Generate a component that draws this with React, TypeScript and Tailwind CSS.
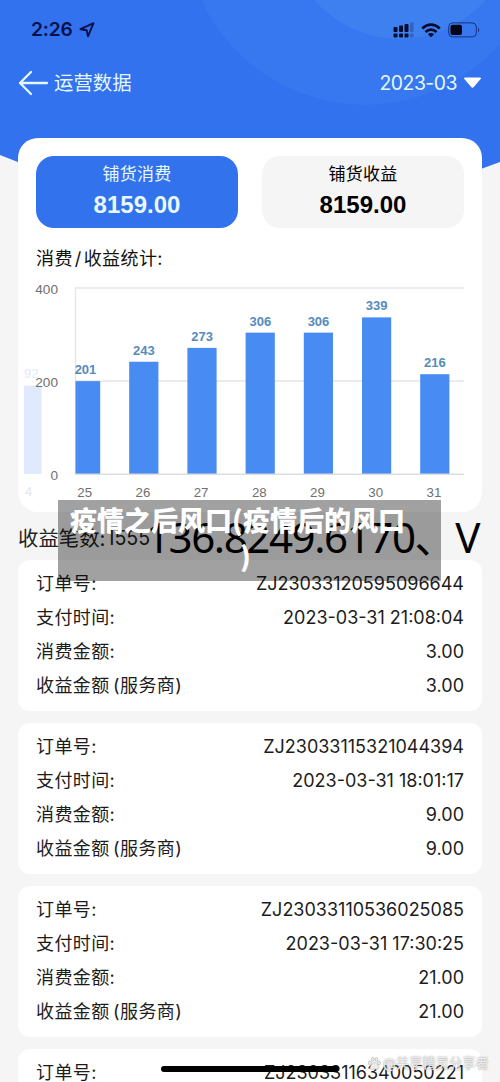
const days = [
  { day: "25", value: 201 },
  { day: "26", value: 243 },
  { day: "27", value: 273 },
  { day: "28", value: 306 },
  { day: "29", value: 306 },
  { day: "30", value: 339 },
  { day: "31", value: 216 },
];

const orders = [
  { id: "ZJ23033120595096644", time: "2023-03-31 21:08:04", amount: "3.00" },
  { id: "ZJ23033115321044394", time: "2023-03-31 18:01:17", amount: "9.00" },
  { id: "ZJ23033110536025085", time: "2023-03-31 17:30:25", amount: "21.00" },
];

const lastOrderId = "ZJ23033116340050221";

function HeaderBackground() {
  return (
    <svg className="absolute inset-x-0 top-0" width="500" height="240" viewBox="0 0 500 240">
      <defs>
        <clipPath id="header">
          <path d="M0 0H500V162Q250 260 0 155Z" />
        </clipPath>
      </defs>
      <g clipPath="url(#header)">
        <rect width="500" height="240" fill="#3272ee" />
        <circle cx="365" cy="-75" r="180" fill="#3777ef" />
        <circle cx="400" cy="-75" r="114" fill="#3f80f1" />
      </g>
    </svg>
  );
}

function StatusBar() {
  return (
    <div className="flex h-[60px] items-center justify-between pr-[20px] pl-[31px] text-[#08104a]">
      <div className="flex items-center gap-[6px]">
        <span className="text-[19.2px] leading-none font-semibold tracking-[-0.2px]">2:26</span>
        <svg width="16" height="16" viewBox="0 0 16 16" fill="none" stroke="currentColor" strokeWidth="1.9" strokeLinejoin="round">
          <path d="M14.5 1.2L1.4 7.2L7.7 8.3L9 14.4Z" />
        </svg>
      </div>
      <div className="flex items-center gap-[7px]">
        <svg width="21" height="16" viewBox="0 0 21 16" fill="#050b2c">
          <rect x="0.5" y="5" width="4" height="5" rx="1" />
          <rect x="6" y="3.5" width="4" height="6.5" rx="1" />
          <rect x="11.5" y="2" width="4" height="8" rx="1" />
          <rect x="17" y="0.5" width="3.5" height="9.5" rx="1" opacity="0.25" />
          <rect x="0.5" y="11.5" width="4" height="4" rx="1" />
          <rect x="6" y="11.5" width="4" height="4" rx="1" />
          <rect x="11.5" y="11.5" width="4" height="4" rx="1" />
          <rect x="17" y="11.5" width="3.5" height="4" rx="1" opacity="0.25" />
        </svg>
        <svg width="20" height="15" viewBox="0 0 20 15" fill="none" stroke="#050b2c" strokeWidth="2.7">
          <path d="M1.2 5.4Q10 -2.2 18.8 5.4" />
          <path d="M4.4 9Q10 4.2 15.6 9" />
          <path d="M10 14.3L6.8 11.3Q10 8.8 13.2 11.3Z" fill="#050b2c" stroke="none" />
        </svg>
        <svg width="32" height="16" viewBox="0 0 32 16">
          <rect x="0.7" y="0.9" width="27.6" height="14" rx="4" fill="none" stroke="#17347c" strokeWidth="1" />
          <rect x="2.5" y="2.7" width="11.5" height="10.4" rx="2" fill="#020516" />
          <path d="M30 5.5Q32.5 8 30 10.5Z" fill="#17347c" />
        </svg>
      </div>
    </div>
  );
}

function NavBar() {
  return (
    <div className="flex h-[46px] items-center justify-between pr-[18px] pl-[18px] text-[#e4f8fb]">
      <div className="flex items-center gap-[5px]">
        <svg width="31" height="26" viewBox="0 0 31 26" fill="none" stroke="currentColor" strokeWidth="2.3" strokeLinecap="round" strokeLinejoin="round">
          <path d="M13 2L2 13L13 24M2 13H29" />
        </svg>
        <span className="pt-[2px] text-[19.4px]">运营数据</span>
      </div>
      <div className="flex items-center gap-[6px] pt-px">
        <span className="text-[19.4px] tracking-[-0.5px]">2023-03</span>
        <svg width="19" height="12" viewBox="0 0 19 12" fill="white">
          <path d="M2 0.5H17Q19 0.5 17.6 2.1L11 9.8Q9.5 11.6 8 9.8L1.4 2.1Q0 0.5 2 0.5Z" />
        </svg>
      </div>
    </div>
  );
}

function BarChart() {
  const bottom = 199;
  return (
    <svg className="block font-['Liberation_Sans',sans-serif]" width="464" height="237" viewBox="0 0 464 237">
      <g stroke="#e3e4e7" strokeWidth="1.3">
        <path d="M57 13H446" />
        <path d="M57 106H446" />
        <path d="M57.5 13V199" />
      </g>
      <g fill="#e1eafd">
        <rect x="6" y="110.5" width="17.5" height="88.5" />
        <text x="6" y="103" fontSize="13">92</text>
        <text x="7" y="221" fontSize="13" fill="#e5e7e9">4</text>
      </g>
      <g fontSize="13.6" fill="#707070" textAnchor="end">
        <text x="40" y="18.5">400</text>
        <text x="40" y="111.5">200</text>
        <text x="40" y="204.5">0</text>
      </g>
      {days.map((d, i) => {
        const x = 53 + i * 58.2;
        const left = i === 0 ? 57.5 : x;
        const top = bottom - d.value * 0.462;
        return (
          <g key={d.day} textAnchor="middle">
            <rect x={left} y={top} width={x + 29.2 - left} height={bottom - top} fill="#478bf3" />
            <text x={i === 0 ? 67.5 : x + 14.7} y={top - 7} fontSize="13" fontWeight="bold" fill="#558bbd">
              {d.value}
            </text>
            <text x={x + 13.7} y="221.5" fontSize="13.3" fill="#707070">
              {d.day}
            </text>
          </g>
        );
      })}
      <path d="M57 199.3H446" stroke="#dadde2" strokeWidth="1.6" />
    </svg>
  );
}

function SummaryCard() {
  return (
    <section className="h-[374px] rounded-[20px] bg-white">
      <div className="flex justify-between px-[18px] pt-[18px]">
        <div className="flex h-[72px] w-[202px] flex-col items-center rounded-[18px] bg-[#3272ed] pt-[6px] text-[#e8f8fd]">
          <p className="text-[17px] leading-[25px] tracking-[0.2px]">铺货消费</p>
          <p className="font-['Liberation_Sans',sans-serif] text-[24px] leading-[36px] font-bold">8159.00</p>
        </div>
        <div className="flex h-[72px] w-[202px] flex-col items-center rounded-[18px] bg-[#f5f5f5] pt-[6px] text-black">
          <p className="text-[17px] leading-[25px] tracking-[0.2px]">铺货收益</p>
          <p className="font-['Liberation_Sans',sans-serif] text-[24px] leading-[36px] font-bold">8159.00</p>
        </div>
      </div>
      <h2 className="mt-[17px] h-[30px] pl-[18px] text-[18px] leading-[27px] tracking-[0.4px] text-[#111]">
        消费<span className="mx-[2px]">/</span>收益统计:
      </h2>
      <BarChart />
    </section>
  );
}

function OrderRow({ label, value }: { label: React.ReactNode; value: string }) {
  return (
    <div className="flex h-[34px] items-center justify-between">
      <span className="text-[18px] tracking-[0.4px] [word-spacing:-2px]">{label}</span>
      <span className="text-[18px]">{value}</span>
    </div>
  );
}

function OrderCard({ order }: { order: (typeof orders)[number] }) {
  return (
    <article className="h-[151px] shrink-0 rounded-[12px] bg-white px-[18px] pt-[6px] whitespace-nowrap text-[#1c1c1c]">
      <OrderRow label="订单号:" value={order.id} />
      <OrderRow label="支付时间:" value={order.time} />
      <OrderRow label="消费金额:" value={order.amount} />
      <OrderRow label="收益金额 (服务商)" value={order.amount} />
    </article>
  );
}

function Caption() {
  return (
    <>
      <div className="absolute top-[500px] left-[58px] h-[81px] w-[383px] bg-black/37" />
      <p className="absolute top-[505px] left-[146px] font-['Noto_Sans','Noto_Sans_CJK_SC',sans-serif] text-[42px] leading-[64px] tracking-[-1.4px] whitespace-nowrap text-black">
        136.8249.6170、V
      </p>
      <div className="absolute top-[502px] left-[59px] w-[383px] text-center font-['Noto_Sans_CJK_SC',sans-serif] text-[27px] leading-[36px] font-black whitespace-nowrap text-white">
        <p className="-ml-[26px]">疫情之后风口(疫情后的风口</p>
        <p className="-ml-[10px]">)</p>
      </div>
    </>
  );
}

function Watermark() {
  return (
    <div className="absolute top-[1053px] left-[368px] flex items-center gap-[2px] text-[#ededed] [text-shadow:0_0_2px_#888]">
      <svg width="13" height="13" viewBox="0 0 13 13" fill="#eee" stroke="#b5b5b5" strokeWidth="0.7">
        <ellipse cx="2" cy="6" rx="1.5" ry="2" />
        <ellipse cx="4.8" cy="2.5" rx="1.4" ry="2" />
        <ellipse cx="8.4" cy="2.5" rx="1.4" ry="2" />
        <ellipse cx="11" cy="6" rx="1.5" ry="2" />
        <path d="M6.5 5.5C4.8 5.5 4 7.5 2.8 8.8C1.3 10.5 2.6 12.6 4.6 12.2Q6.5 11.8 8.4 12.2C10.4 12.6 11.7 10.5 10.2 8.8C9 7.5 8.2 5.5 6.5 5.5Z" />
      </svg>
      <span className="text-[13.3px] leading-[20px] whitespace-nowrap">@共享精灵分享者</span>
    </div>
  );
}

export default function App() {
  return (
    <main className="relative h-[1082px] w-[500px] overflow-hidden bg-[#f5f5f5] font-['Inter','Noto_Sans_CJK_SC',sans-serif]">
      <HeaderBackground />
      <div className="relative">
        <StatusBar />
        <NavBar />
        <div className="px-[18px] pt-[32px]">
          <SummaryCard />
          <p className="flex h-[48px] items-center pt-[6px] text-[20.4px] text-[#222]">
            收益笔数:<span className="ml-px text-[19.6px]">1555</span>
          </p>
          <div className="flex flex-col gap-[12px]">
            {orders.map((order) => (
              <OrderCard key={order.id} order={order} />
            ))}
            <article className="h-[33px] rounded-t-[12px] bg-white px-[18px] pt-[6px] text-[#1c1c1c]">
              <OrderRow label="订单号:" value={lastOrderId} />
            </article>
          </div>
        </div>
      </div>
      <Caption />
      <div className="absolute top-[1066px] left-[161px] h-[6px] w-[178px] rounded-full bg-black" />
      <Watermark />
    </main>
  );
}
